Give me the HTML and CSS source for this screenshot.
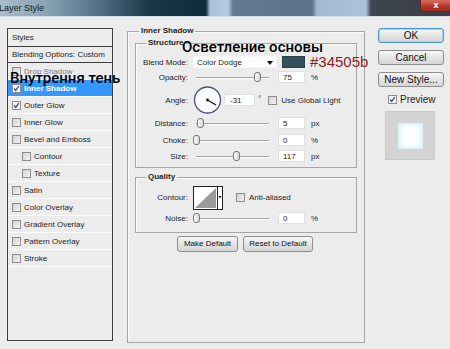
FILE: index.html
```html
<!DOCTYPE html>
<html lang="en">
<head>
    <meta charset="UTF-8">
    <title>Layer Style</title>
    <link rel="stylesheet" href="styles.css">
</head>
<body>
    <div class="titlebar">
        <span class="title">Layer Style</span>
        <span class="close">x</span>
    </div>

    <div class="dialog">
        <!-- left list of effects -->
        <ul class="styles-list">
            <li class="head">Styles</li>
            <li class="head blending">Blending Options: Custom</li>
            <li class="item dim"><span class="cb"></span>Drop Shadow</li>
            <li class="item active"><span class="cb checked"><svg viewBox="0 0 9 9"><path d="M1.5 4.5 L3.5 7 L7.5 1.5"/></svg></span>Inner Shadow</li>
            <li class="item"><span class="cb checked"><svg viewBox="0 0 9 9"><path d="M1.5 4.5 L3.5 7 L7.5 1.5"/></svg></span>Outer Glow</li>
            <li class="item"><span class="cb"></span>Inner Glow</li>
            <li class="item"><span class="cb"></span>Bevel and Emboss</li>
            <li class="item sub"><span class="cb"></span>Contour</li>
            <li class="item sub"><span class="cb"></span>Texture</li>
            <li class="item"><span class="cb"></span>Satin</li>
            <li class="item"><span class="cb"></span>Color Overlay</li>
            <li class="item"><span class="cb"></span>Gradient Overlay</li>
            <li class="item"><span class="cb"></span>Pattern Overlay</li>
            <li class="item"><span class="cb"></span>Stroke</li>
        </ul>

        <!-- settings -->
        <fieldset class="group main">
            <legend>Inner Shadow</legend>

            <fieldset class="group inner structure">
                <legend>Structure</legend>
                <div class="row blend">
                    <span class="label">Blend Mode:</span>
                    <span class="select">Color Dodge<i class="arrow"></i></span>
                    <span class="swatch"></span>
                </div>
                <div class="row opacity">
                    <span class="label">Opacity:</span>
                    <span class="slider"><i class="thumb" style="left: 76%"></i></span>
                    <span class="num">75</span>
                    <span class="unit">%</span>
                </div>
                <div class="row angle">
                    <span class="label">Angle:</span>
                    <svg class="dial" width="29" height="28" viewBox="0 0 29 28">
                        <circle cx="14.5" cy="14" r="13" fill="#fbfbfb" stroke="#4a5670" stroke-width="1.3"/>
                        <line x1="14.5" y1="14" x2="23" y2="19" stroke="#111" stroke-width="1.2"/>
                        <circle cx="14.5" cy="14" r="1.4" fill="#111"/>
                    </svg>
                    <span class="num wide">-31</span>
                    <span class="deg">°</span>
                    <span class="cb"></span>
                    <span class="check-label">Use Global Light</span>
                </div>
                <div class="row distance">
                    <span class="label">Distance:</span>
                    <span class="slider"><i class="thumb" style="left: 5%"></i></span>
                    <span class="num">5</span>
                    <span class="unit">px</span>
                </div>
                <div class="row choke">
                    <span class="label">Choke:</span>
                    <span class="slider"><i class="thumb" style="left: 0%"></i></span>
                    <span class="num">0</span>
                    <span class="unit">%</span>
                </div>
                <div class="row size">
                    <span class="label">Size:</span>
                    <span class="slider"><i class="thumb" style="left: 50%"></i></span>
                    <span class="num">117</span>
                    <span class="unit">px</span>
                </div>
            </fieldset>

            <fieldset class="group inner quality">
                <legend>Quality</legend>
                <div class="row contour">
                    <span class="label">Contour:</span>
                    <svg class="curve" width="30" height="24" viewBox="0 0 30 24">
                        <rect x="0.5" y="0.5" width="29" height="23" fill="#fff" stroke="#222"/>
                        <polygon points="2,22 23,2 23,22" fill="#9a9a9a"/>
                        <line x1="24.5" y1="1" x2="24.5" y2="23" stroke="#222"/>
                        <polygon points="25.5,10 28.5,10 27,12.5" fill="#111"/>
                    </svg>
                    <span class="cb"></span>
                    <span class="check-label">Anti-aliased</span>
                </div>
                <div class="row noise">
                    <span class="label">Noise:</span>
                    <span class="slider"><i class="thumb" style="left: 0%"></i></span>
                    <span class="num">0</span>
                    <span class="unit">%</span>
                </div>
            </fieldset>

            <div class="defaults">
                <span class="btn">Make Default</span>
                <span class="btn">Reset to Default</span>
            </div>
        </fieldset>

        <!-- buttons and preview -->
        <div class="actions">
            <span class="btn big default">OK</span>
            <span class="btn big">Cancel</span>
            <span class="btn big">New Style...</span>
            <div class="preview-check">
                <span class="cb checked"><svg viewBox="0 0 9 9"><path d="M1.5 4.5 L3.5 7 L7.5 1.5"/></svg></span>
                <span>Preview</span>
            </div>
            <div class="preview"><div class="preview-square"></div></div>
        </div>
    </div>

    <!-- translation notes over the screenshot -->
    <div class="note note-inner">Внутрення тень</div>
    <div class="note note-blend">Осветление основы</div>
    <div class="note note-color">#34505b</div>
</body>
</html>
```

FILE: styles.css
```css
* {
    box-sizing: border-box;
}

body {
    margin: 0;
    width: 450px;
    height: 349px;
    overflow: hidden;
    position: relative;
    background: #ececec;
    font-family: 'Liberation Sans', Arial, sans-serif;
    font-size: 8px;
    color: #1e1e1e;
}

/* Title bar */
.titlebar {
    height: 17px;
    display: flex;
    justify-content: space-between;
    align-items: flex-start;
    border-bottom: 1px solid #d4dbe0;
    background: linear-gradient(90deg,
        #a7bdcb 0, #8aa5b7 45px, #4a6a80 105px, #1a3647 150px, #102b3b 206px,
        #a9c2da 210px, #b4cadf 228px, #627b93 233px, #5b7289 312px,
        #a2bbd4 317px, #aac2da 366px, #3d454e 371px, #383f47 450px);
}

.title {
    font-size: 9px;
    margin-left: -1px;
    padding-top: 3px;
    color: #101820;
}

.close {
    width: 32px;
    height: 12px;
    margin-right: -2px;
    border: 1px solid #6b2219;
    border-top: 0;
    border-radius: 0 0 0 4px;
    background: linear-gradient(#d9715f, #b4382a 55%, #a12a1e);
    color: #fff;
    font-weight: bold;
    font-size: 9px;
    line-height: 10px;
    text-align: center;
}

/* Layout */
.dialog {
    display: flex;
    align-items: flex-start;
    padding-top: 11px;
}

/* Styles list */
.styles-list {
    list-style: none;
    margin: 0 0 0 7px;
    padding: 0;
    width: 106px;
    height: 313px;
    border: 1px solid #3e3e3e;
    background: #ececec;
}

.head {
    height: 18px;
    line-height: 17px;
    padding-left: 4px;
    border-bottom: 1px solid #3e3e3e;
}

.head.blending {
    height: 16px;
    line-height: 15px;
}

.item {
    height: 17px;
    display: flex;
    align-items: center;
    gap: 3px;
    padding-left: 4px;
    border-bottom: 1px solid #fbfbfb;
}

.item.sub {
    padding-left: 14px;
}

.item.dim {
    color: #777;
}

.item.active {
    background: #3399ff;
    color: #fff;
    font-weight: bold;
}

/* Checkbox */
.cb {
    width: 9px;
    height: 9px;
    flex: none;
    border: 1px solid #8d8d8d;
    background: linear-gradient(135deg, #d2d2d2, #f3f3f3);
    display: inline-flex;
}

.cb.checked {
    background: #f7f7f7;
}

.cb svg {
    width: 7px;
    height: 7px;
}

.cb path {
    fill: none;
    stroke: #2a4a9c;
    stroke-width: 1.6;
}

/* Group boxes */
.group {
    margin: 0;
    border: 1px solid #a6a6a6;
    box-shadow: inset 1px 1px 0 #fafafa;
}

.group legend {
    font-weight: bold;
    line-height: 10px;
    padding: 0 2px;
}

.main {
    margin-left: 14px;
    margin-top: -2px;
    width: 238px;
    height: 317px;
    padding: 0 7px;
}

.main > legend {
    margin-left: 4px;
}

.inner {
    padding: 0 5px;
}

.inner legend {
    margin-left: 5px;
}

.structure {
    margin-top: 2px;
    height: 130px;
    padding-top: 7px;
}

.quality {
    margin-top: 4px;
    height: 61px;
    padding-top: 4px;
}

/* Rows */
.row {
    display: flex;
    align-items: center;
    height: 14px;
}

.label {
    width: 47px;
    margin-right: 5px;
    text-align: right;
    flex: none;
}

.opacity { margin-top: 1px; }
.angle { margin-top: 2px; height: 28px; }
.distance { margin-top: 2px; }
.choke { margin-top: 3px; }
.size { margin-top: 2px; }
.contour { height: 23px; }
.noise { margin-top: 2px; }

.select {
    position: relative;
    width: 84px;
    height: 12px;
    line-height: 12px;
    padding-left: 3px;
    background: #fff;
    border: 1px solid #f6f6f6;
}

.arrow {
    position: absolute;
    right: 3px;
    top: 4px;
    border-left: 3px solid transparent;
    border-right: 3px solid transparent;
    border-top: 4px solid #111;
}

.swatch {
    width: 23px;
    height: 12px;
    margin-left: 5px;
    background: #34505b;
    border: 1px solid #2a3f47;
}

.slider {
    position: relative;
    width: 80px;
    height: 12px;
    margin-right: 5px;
    flex: none;
}

.slider::before {
    content: '';
    position: absolute;
    left: 3px;
    right: 4px;
    top: 6px;
    border-top: 1px solid #a4a4a4;
    border-bottom: 1px solid #fdfdfd;
}

.thumb {
    position: absolute;
    top: 1px;
    width: 7px;
    height: 10px;
    border: 1px solid #777;
    border-radius: 3px;
    background: linear-gradient(90deg, #fdfdfd, #d6d6d6);
}

.num {
    width: 27px;
    height: 12px;
    line-height: 11px;
    padding-left: 4px;
    background: #fff;
    border: 1px solid #e0e0e0;
    flex: none;
}

.num.wide {
    width: 31px;
    margin-left: 2px;
    padding-left: 5px;
}

.unit {
    margin-left: 6px;
}

.deg {
    margin-left: 3px;
    margin-right: 7px;
    align-self: flex-start;
    margin-top: 8px;
}

.check-label {
    margin-left: 4px;
}

.dial {
    flex: none;
}

.curve {
    flex: none;
    margin-right: 13px;
}

/* Buttons */
.defaults {
    display: flex;
    gap: 5px;
    margin: 3px 0 0 42px;
}

.btn {
    display: inline-block;
    height: 16px;
    line-height: 14px;
    padding: 0;
    white-space: nowrap;
    text-align: center;
    border: 1px solid #8c8c8c;
    border-radius: 3px;
    background: linear-gradient(#f8f8f8, #e4e4e4 50%, #d6d6d6);
    color: #111;
}

.defaults .btn:first-child { width: 61px; }
.defaults .btn:last-child { width: 70px; }

.actions {
    margin-left: 13px;
    width: 66px;
    display: flex;
    flex-direction: column;
    gap: 7px;
}

.btn.big {
    height: 15px;
    line-height: 13px;
    font-size: 10px;
}

.btn.default {
    border-color: #4c97c9;
    box-shadow: inset 0 0 0 1px #a8d6f2;
}

.preview-check {
    display: flex;
    align-items: center;
    gap: 3px;
    margin-left: 10px;
    font-size: 10px;
}

.preview {
    margin: -1px 0 0 7px;
    width: 50px;
    height: 49px;
    display: flex;
    align-items: center;
    justify-content: center;
    background: #d3d3d3;
    border: 1px solid #cacaca;
}

.preview-square {
    width: 25px;
    height: 26px;
    background: #fbffff;
    box-shadow: inset 0 0 5px 2px #d6f0f6;
}

/* Notes */
.note {
    position: absolute;
    font-family: Roboto, 'Open Sans', sans-serif;
    font-size: 15px;
    font-weight: 500;
    line-height: 15px;
    color: #000;
    white-space: nowrap;
}

.note-inner {
    left: 10px;
    top: 71px;
}

.note-blend {
    left: 182px;
    top: 40px;
}

.note-color {
    left: 310px;
    top: 54px;
    font-family: 'Liberation Sans', Arial, sans-serif;
    font-weight: normal;
    color: #931b1b;
}
```
